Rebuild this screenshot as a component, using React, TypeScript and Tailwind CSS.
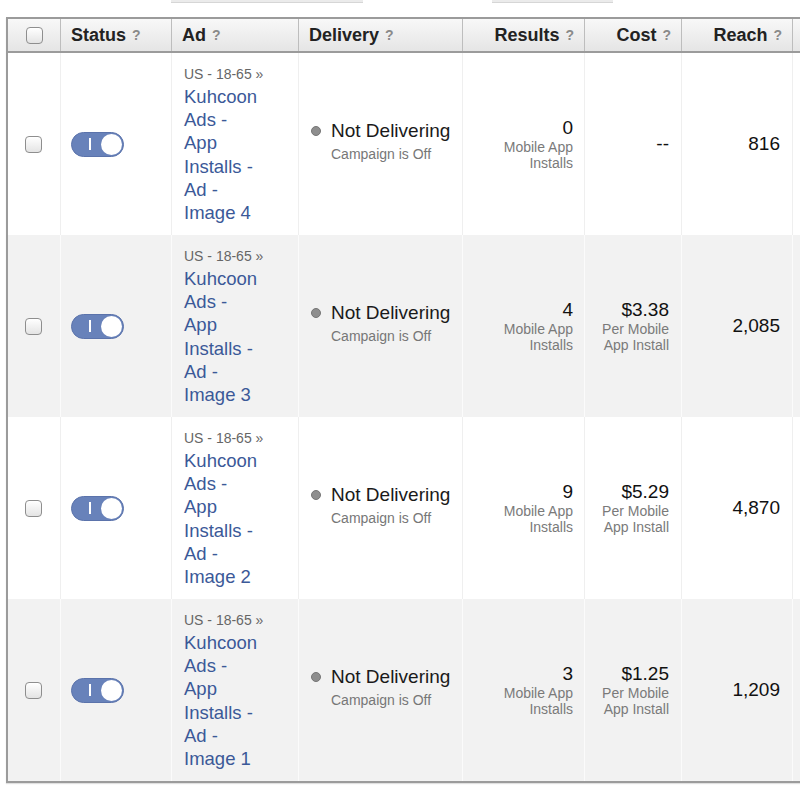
import React from 'react';

interface AdRow {
  name: string;
  results: string;
  cost: string | null;
  reach: string;
}

const rows: AdRow[] = [
  { name: 'Kuhcoon Ads - App Installs - Ad - Image 4', results: '0', cost: null, reach: '816' },
  { name: 'Kuhcoon Ads - App Installs - Ad - Image 3', results: '4', cost: '$3.38', reach: '2,085' },
  { name: 'Kuhcoon Ads - App Installs - Ad - Image 2', results: '9', cost: '$5.29', reach: '4,870' },
  { name: 'Kuhcoon Ads - App Installs - Ad - Image 1', results: '3', cost: '$1.25', reach: '1,209' },
];

const gridCols = 'grid grid-cols-[53px_111px_127px_164px_122px_97px_111px_120px]';

const Help = () => (
  <span className="ml-[6px] text-[14px] font-bold text-[#8a8a8a]">?</span>
);

const Checkbox = () => (
  <div className="h-[17px] w-[17px] rounded-[4px] border border-[#8e8e8e] bg-linear-to-b from-[#ffffff] to-[#e4e4e4] shadow-[inset_0_1px_0_#fff]" />
);

const Toggle = () => (
  <div className="flex h-[25px] w-[53px] items-center rounded-full border border-[#5b73ab] bg-[#6882ba]">
    <div className="ml-[17px] h-[12px] w-[2px] bg-white" />
    <div className="ml-auto mr-[1px] h-[21px] w-[21px] rounded-full bg-white" />
  </div>
);

const HeaderCell = ({ label, right = false }: { label: string; right?: boolean }) => (
  <div
    className={`flex items-center border-r border-[#bdbdbd] px-[10px] text-[18px] font-bold text-[#222] ${
      right ? 'justify-end' : ''
    }`}
  >
    {label}
    <Help />
  </div>
);

const Row = ({ row, shaded }: { row: AdRow; shaded: boolean }) => {
  const cell = `flex h-[182px] border-r ${shaded ? 'border-[#fbfbfb]' : 'border-[#efefef]'}`;

  return (
    <div className={`${gridCols} ${shaded ? 'bg-[#f2f2f2]' : 'bg-white'}`}>
      <div className={`${cell} items-center justify-center pr-[2px]`}>
        <Checkbox />
      </div>

      <div className={`${cell} items-center pl-[10px]`}>
        <Toggle />
      </div>

      <div className={`${cell} items-center pl-[12px] pt-[2px]`}>
        <div>
          <div className="text-[14px] leading-[17px] text-[#666]">US - 18-65 »</div>
          <a className="mt-[2px] block w-[80px] text-[18.5px] leading-[23.2px] text-[#3b5998]">{row.name}</a>
        </div>
      </div>

      <div className={`${cell} items-center pb-[7px] pl-[12px]`}>
        <div className="flex items-start">
          <div className="mr-[10px] mt-[7px] h-[10px] w-[10px] rounded-full border border-[#767676] bg-[#8e8e8e]" />
          <div>
            <div className="text-[19px] leading-[24px] text-[#1a1a1a]">Not Delivering</div>
            <div className="mt-[2px] text-[14px] leading-[18px] text-[#777]">Campaign is Off</div>
          </div>
        </div>
      </div>

      <div className={`${cell} items-center justify-end pr-[11px] text-right`}>
        <div>
          <div className="text-[19px] leading-[22px] text-[#111]">{row.results}</div>
          <div className="text-[14px] leading-[16.5px] text-[#7a7a7a]">
            Mobile App
            <br />
            Installs
          </div>
        </div>
      </div>

      <div className={`${cell} items-center justify-end pr-[12px] text-right`}>
        {row.cost ? (
          <div>
            <div className="text-[19px] leading-[22px] text-[#111]">{row.cost}</div>
            <div className="text-[14px] leading-[16.5px] text-[#7a7a7a]">
              Per Mobile
              <br />
              App Install
            </div>
          </div>
        ) : (
          <div className="text-[19px] leading-[22px] text-[#111]">--</div>
        )}
      </div>

      <div className={`${cell} items-center justify-end pr-[12px] text-[19px] text-[#111]`}>{row.reach}</div>

      <div className={cell} />
    </div>
  );
};

export default function App() {
  return (
    <div className="h-[791px] w-[800px] overflow-hidden bg-white font-['Liberation_Sans',Arial,sans-serif]">
      {/* toolbar controls sitting above the table */}
      <div className="flex h-[17px] items-start">
        <div className="ml-[171px] h-[3px] w-[192px] border-b border-[#d6d6d6] bg-[#ebebeb]" />
        <div className="ml-[129px] h-[3px] w-[121px] border-b border-[#d6d6d6] bg-[#ebebeb]" />
      </div>

      <div className="ml-[6px] w-[900px] border-y-2 border-l-2 border-[#9b9b9b] shadow-[0_1px_1px_rgba(0,0,0,0.12)]">
        <div className={`${gridCols} h-[34px] border-b-2 border-[#9b9b9b] bg-linear-to-b from-[#f8f8f8] to-[#e5e5e5]`}>
          <div className="flex items-center justify-center border-r border-[#bdbdbd]">
            <Checkbox />
          </div>
          <HeaderCell label="Status" />
          <HeaderCell label="Ad" />
          <HeaderCell label="Delivery" />
          <HeaderCell label="Results" right />
          <HeaderCell label="Cost" right />
          <HeaderCell label="Reach" right />
          <div className="border-r border-[#bdbdbd]" />
        </div>

        {rows.map((row, i) => (
          <Row key={row.name} row={row} shaded={i % 2 === 1} />
        ))}
      </div>
    </div>
  );
}
